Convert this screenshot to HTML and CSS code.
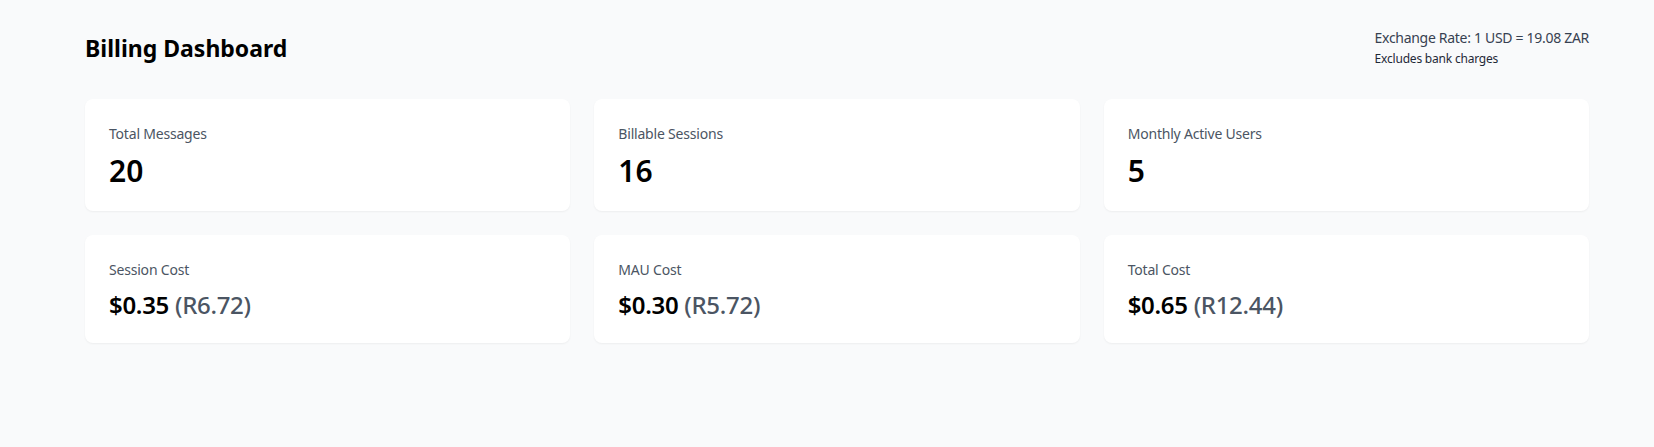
FILE: index.html
```html
<!DOCTYPE html>
<html lang="en">
<head>
<meta charset="utf-8">
<title>Billing Dashboard</title>
<link rel="stylesheet" href="styles.css">
</head>
<body>
<main class="page">
  <header class="header">
    <h1 class="title">Billing Dashboard</h1>
    <div class="rate">
      <div class="rate-main">Exchange Rate: 1 USD = 19.08 ZAR</div>
      <div class="rate-note">Excludes bank charges</div>
    </div>
  </header>
  <section class="grid">
    <div class="card">
      <div class="label">Total Messages</div>
      <div class="count">20</div>
    </div>
    <div class="card">
      <div class="label">Billable Sessions</div>
      <div class="count">16</div>
    </div>
    <div class="card">
      <div class="label">Monthly Active Users</div>
      <div class="count">5</div>
    </div>
    <div class="card">
      <div class="label">Session Cost</div>
      <div class="cost">$0.35 <span class="zar">(R6.72)</span></div>
    </div>
    <div class="card">
      <div class="label">MAU Cost</div>
      <div class="cost">$0.30 <span class="zar">(R5.72)</span></div>
    </div>
    <div class="card">
      <div class="label">Total Cost</div>
      <div class="cost">$0.65 <span class="zar">(R12.44)</span></div>
    </div>
  </section>
</main>
</body>
</html>
```
FILE: styles.css
```css
* { box-sizing: border-box; }
html, body {
  margin: 0;
  padding: 0;
  background: #f9fafb;
  font-family: "Noto Sans", "Open Sans", sans-serif;
  color: #000;
}
.page {
  padding: 28px 65px 32px 85px;
}
.header {
  display: flex;
  justify-content: space-between;
  align-items: flex-start;
  margin-bottom: 31px;
}
.title {
  margin: 0;
  font-size: 23px;
  line-height: 40px;
  font-weight: 700;
  letter-spacing: 0;
}
.rate {
  display: flex;
  flex-direction: column;
}
.rate-main {
  font-size: 14px;
  line-height: 20px;
  color: #374151;
  letter-spacing: -0.3px;
}
.rate-note {
  margin-top: 3px;
  font-size: 12px;
  line-height: 16px;
  color: #1f2937;
  letter-spacing: -0.2px;
}
.grid {
  display: grid;
  grid-template-columns: repeat(3, 1fr);
  gap: 24px;
}
.card {
  background: #fff;
  border-radius: 8px;
  padding: 25px 24px 22px;
  box-shadow: 0 1px 2px rgba(0, 0, 0, 0.05);
}
.label {
  font-size: 14px;
  line-height: 20px;
  color: #4b5563;
  margin-bottom: 9px;
  letter-spacing: -0.2px;
}
.count {
  font-size: 30px;
  line-height: 36px;
  font-weight: 600;
}
.cost {
  font-size: 24px;
  line-height: 32px;
  font-weight: 600;
  letter-spacing: -0.3px;
}
.zar {
  color: #4b5563;
  font-weight: 500;
}
```
